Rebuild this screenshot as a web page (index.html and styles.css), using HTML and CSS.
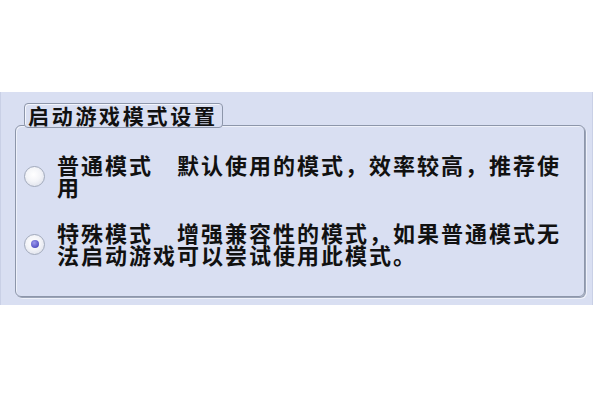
FILE: index.html
```html
<!DOCTYPE html>
<html lang="zh-CN">
<head>
<meta charset="utf-8">
<title>启动游戏模式设置</title>
<link rel="stylesheet" href="styles.css">
</head>
<body>
<div class="panel">
  <div class="group">
    <div class="legend">启动游戏模式设置</div>
    <div class="options">
      <div class="option">
        <span class="radio"></span>
        <span class="label">普通模式　默认使用的模式，效率较高，推荐使用</span>
      </div>
      <div class="option">
        <span class="radio checked"><span class="dot"></span></span>
        <span class="label">特殊模式　增强兼容性的模式，如果普通模式无法启动游戏可以尝试使用此模式。</span>
      </div>
    </div>
  </div>
</div>
</body>
</html>
```

FILE: styles.css
```css
html, body {
  margin: 0;
  background: #ffffff;
}
body {
  font-family: "Noto Sans CJK SC", "Noto Sans", sans-serif;
  color: #111111;
}
.panel {
  margin-top: 92px;
  width: 593px;
  height: 213px;
  box-sizing: border-box;
  background: #d9dff2;
  border-left: 1px solid #c9d0e6;
  border-right: 1px solid #c9d0e6;
  padding: 33px 7px 0 14px;
}
.group {
  position: relative;
  height: 172px;
  box-sizing: border-box;
  border: 1px solid #8d96aa;
  border-radius: 6px;
  box-shadow: 1px 1px 0 #9ba4b8, 2px 2px 0 #eef1fa, inset 1px 1px 0 #eef1fa;
}
.legend {
  position: absolute;
  left: 8px;
  top: -23px;
  height: 25px;
  box-sizing: border-box;
  padding: 0 4px 0 3px;
  border: 1px solid #8d96aa;
  border-radius: 4px;
  background: #d9dff2;
  box-shadow: inset 1px 1px 0 #f3f5fc;
  font-size: 21px;
  line-height: 23px;
  letter-spacing: 2.7px;
  font-weight: 600;
  white-space: nowrap;
}
.options {
  display: flex;
  flex-direction: column;
  gap: 24px;
  padding: 27px 0 0 8px;
}
.option {
  display: flex;
  align-items: center;
}
.radio {
  flex: none;
  width: 21px;
  height: 21px;
  box-sizing: border-box;
  border: 1.5px solid #a2aabb;
  border-radius: 50%;
  background: radial-gradient(circle at 45% 40%, #ffffff 0%, #f3f4f8 45%, #d5d9e6 100%);
  margin-right: 12px;
  margin-top: 2px;
  display: flex;
  align-items: center;
  justify-content: center;
}
.dot {
  width: 8px;
  height: 8px;
  border-radius: 50%;
  background: radial-gradient(circle at 40% 35%, #9b98ee 0%, #5552c4 70%, #4a47b0 100%);
}
.label {
  width: 510px;
  font-size: 22px;
  line-height: 22px;
  letter-spacing: 2px;
  font-weight: 600;
}
```
